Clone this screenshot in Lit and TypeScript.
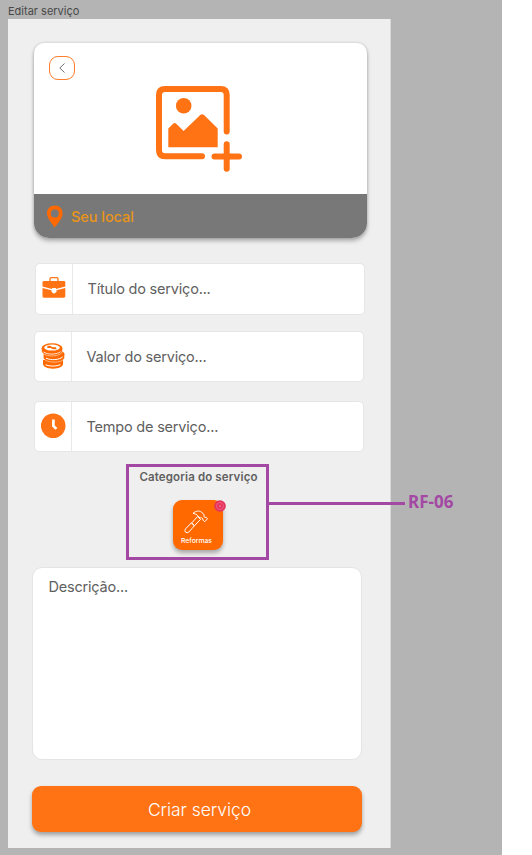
import { LitElement, html, css, svg } from "lit";
import { customElement, property } from "lit/decorators.js";

const briefcase = svg`<svg width="24" height="24" viewBox="0 0 24 24">
  <path d="M8 4.500V2.100Q8 .7 9.400.7h5.200Q16 .7 16 2.100v2.400" fill="none" stroke="#ff7315" stroke-width="1.300"/>
  <path d="M2 4h20q1.300 0 1.300 1.300V9.500L14 12v-1h-4v1L.5 9.500V5.300Q.5 4 2 4Z" fill="#ff7315"/>
  <path d="M.5 10.900 9.500 13.200v1.800l2.500 1.800 2.500-1.800v-1.800l8.800-2.300v8.400q0 1.400-1.400 1.400H1.900Q.5 20.700.5 19.300Z" fill="#ff7315"/>
</svg>`;

const coins = svg`<svg width="24" height="27" viewBox="0 0 24 27">
  <g fill="#ff6900">
    <path d="M2 17v4c0 2.700 4.500 4.700 10 4.700s10-2 10-4.700v-4Z"/>
    <path d="M4.500 21.800c4 1.800 11 1.800 15-.2" fill="none" stroke="#fff" stroke-width="1"/>
    <path d="M2.300 11v3.300c0 2.700 4.900 4.800 10.900 4.800s10.300-2 10.300-4.800V11Z" stroke="#fff" stroke-width=".5"/>
    <ellipse cx="13.200" cy="11" rx="10.400" ry="4.400"/>
    <path d="M5 15.200c5 2.300 13 1.800 16.600-1.200" fill="none" stroke="#fff" stroke-width="1"/>
    <path d="M.6 5.500v2.500c0 2.800 4.700 4.900 10.400 4.900s10.300-2.100 10.300-4.900V5.500Z" stroke="#fff" stroke-width=".5"/>
    <ellipse cx="11" cy="5.200" rx="10.400" ry="4.900"/>
    <path d="M2.500 9c4 2.800 13 2.800 17-.2" fill="none" stroke="#fff" stroke-width=".8"/>
  </g>
  <ellipse cx="11" cy="4.600" rx="7.800" ry="3" fill="#fff"/>
  <path d="m6.600 2.800 4.200.2-1 1 5 .2.900 2.100-5.500-.2.800-1-4.800-.2Z" fill="#ff6900"/>
</svg>`;

const clock = svg`<svg width="25" height="26" viewBox="0 0 25 26">
  <circle cx="12.200" cy="12.700" r="12.300" fill="#ff7315"/>
  <path d="M12.400 6.500v6.400l3 3" fill="none" stroke="#fff" stroke-width="2.700"/>
</svg>`;

@customElement("service-field")
class ServiceField extends LitElement {
  @property({ attribute: false }) icon: unknown;
  @property() label = "";

  static styles = css`
    :host {
      display: flex;
      box-sizing: border-box;
      height: 51px;
      border: 1px solid #e6e6e6;
      border-radius: 5px;
      background: #fff;
    }
    .icon {
      display: flex;
      align-items: center;
      justify-content: center;
      width: 36px;
      padding-bottom: 1px;
      border-right: 1px solid #e8e8e8;
    }
    .icon svg { display: block; }
    .label {
      padding-left: 14.500px;
      line-height: 49px;
      white-space: pre;
    }
  `;

  render() {
    return html`<div class="icon">${this.icon}</div><div class="label">${this.label}</div>`;
  }
}

@customElement("app-root")
class AppRoot extends LitElement {
  static styles = css`
    :host {
      display: block;
      width: 532px;
      height: 855px;
      overflow: hidden;
      background: #fff;
      font-family: Inter, "Noto Sans", sans-serif;
      color: #606060;
    }
    * { box-sizing: border-box; }
    svg { display: block; }
    .canvas {
      width: 502px;
      height: 855px;
      padding-left: 8px;
      background: #b4b4b4;
    }
    .frame-name {
      height: 19px;
      padding-top: 4px;
      font-size: 11px;
      line-height: 15px;
      color: #484848;
    }
    .phone {
      width: 383px;
      height: 829px;
      padding: 24px 0 0 24px;
      background: #efefef;
      border-right: 1px solid #d9d9d9;
    }
    .card {
      width: 333px;
      height: 195px;
      margin-left: 2px;
      border-radius: 10px 10px 15px 15px;
      background: #fff;
      box-shadow: 0 3px 4px rgba(0, 0, 0, .27), 0 0 3px rgba(0, 0, 0, .18);
      overflow: hidden;
    }
    .photo {
      display: flex;
      height: 151px;
      padding: 13px 0 0 15px;
    }
    .back {
      display: flex;
      align-items: center;
      justify-content: center;
      width: 26px;
      height: 24px;
      border: 1px solid #ff7d2b;
      border-radius: 9px;
    }
    .picture { margin: 29px 0 0 80px; }
    .place {
      display: flex;
      align-items: center;
      height: 44px;
      padding-left: 12px;
      gap: 8px;
      background: #787878;
      font-size: 14.500px;
      font-weight: 500;
      letter-spacing: -.05px;
      color: #e8941a;
    }
    .title, .price, .time, .description {
      font-size: 14.500px;
      font-weight: 370;
      letter-spacing: -.2px;
    }
    .title { width: 330px; margin: 25px 0 0 3px; height: 52px; }
    .price { width: 330px; margin: 16px 0 0 2px; }
    .time { width: 330px; margin: 19px 0 0 2px; }
    .marked {
      display: flex;
      align-items: flex-start;
      margin: 12px 0 0 94px;
      width: 340px;
    }
    .category {
      display: flex;
      flex-direction: column;
      align-items: center;
      flex: none;
      width: 143px;
      height: 96px;
      border: 3px solid #a349a4;
    }
    .heading {
      margin: 2px 0 0 2px;
      height: 31px;
      font-size: 11.500px;
      font-weight: 600;
      line-height: 16px;
      letter-spacing: .13px;
      white-space: nowrap;
    }
    .tile {
      position: relative;
      display: flex;
      flex-direction: column;
      align-items: center;
      width: 50px;
      height: 50px;
      padding-top: 9px;
      border-radius: 9px;
      background: #ff6900;
      box-shadow: 0 3px 4px rgba(0, 0, 0, .3);
      font-size: 6.800px;
      font-weight: 500;
      line-height: 11px;
      color: #fff;
    }
    .tile span { margin-right: 2px; }
    .tool { margin-right: 3px; }
    .remove { position: absolute; right: -3px; top: 0; }
    .leader {
      flex: none;
      width: 136px;
      height: 3px;
      margin-top: 38px;
      background: #a349a4;
    }
    .tag {
      margin: 27px 0 0 3px;
      font: 700 17px/22px "Noto Sans", sans-serif;
      color: #a349a4;
      white-space: nowrap;
    }
    .description {
      width: 330px;
      height: 193px;
      margin-top: 7px;
      padding: 9px 0 0 15.500px;
      border: 1px solid #e4e4e4;
      border-radius: 10px;
      background: #fff;
      line-height: 20px;
    }
    .submit {
      display: block;
      width: 330px;
      height: 46px;
      margin-top: 26px;
      padding: 1px 0 0 5px;
      border: 0;
      border-radius: 9px;
      background: #ff7315;
      box-shadow: 0 3px 4px rgba(0, 0, 0, .33);
      font: 360 17.500px/45px Inter, sans-serif;
      letter-spacing: -.05px;
      color: #fff;
    }
  `;

  render() {
    return html`
      <div class="canvas">
        <div class="frame-name">Editar serviço</div>
        <main class="phone">
          <section class="card">
            <div class="photo">
              <div class="back">
                <svg width="8" height="12" viewBox="0 0 8 12"><path d="M6.500 1.500 1.800 6l4.700 4.500" fill="none" stroke="#707070" stroke-width="1"/></svg>
              </div>
              <svg class="picture" width="88" height="88" viewBox="0 0 88 88">
                <g fill="none" stroke="#ff7315" stroke-width="6" stroke-linecap="round">
                  <path d="M71.700 46.500V10q0-6-6-6H10q-6 0-6 6v55q0 6.300 6 6.300H47"/>
                  <path d="M71.700 59.300v24.500M59.500 71.500h24.500"/>
                </g>
                <circle cx="28.700" cy="20.700" r="7.800" fill="#ff7315"/>
                <path d="M13.300 62.300V43.500l4.600-4.600q1.800-1.600 3.600 0l7.100 7.200L45 30.200q2.100-2 4.300 0l13.400 13.300v18.800Z" fill="#ff7315"/>
              </svg>
            </div>
            <div class="place">
              <svg width="17" height="23" viewBox="0 0 17 23"><path fill="#ff6900" fill-rule="evenodd" d="M8.800.5C4.300.5 1 3.900 1 8.200c0 5.100 4.500 9.600 7.800 14.300 3.300-4.700 7.800-9.200 7.800-14.300C16.600 3.900 13.300.5 8.800.5Zm0 4a4 4 0 1 1 0 8 4 4 0 0 1 0-8Z"/></svg>
              <span>Seu local</span>
            </div>
          </section>
          <service-field class="title" .icon=${briefcase} label="Título do serviço..."></service-field>
          <service-field class="price" .icon=${coins} label="Valor do serviço..."></service-field>
          <service-field class="time" .icon=${clock} label="Tempo de serviço..."></service-field>
          <div class="marked">
            <section class="category">
              <div class="heading">Categoria do serviço</div>
              <div class="tile">
                <svg class="tool" width="26" height="26" viewBox="0 0 26 26" fill="none" stroke="#fff" stroke-width="1" stroke-linejoin="round">
                  <path d="M10 4.300C12.800 1.800 16 1.500 18.500 3l2.600 2.800-.2 1.800 1.200.8 1-.2 1.400 1.600-2.900 3-1.700-1.700v-1.200l-1.200-1.100-1.600.2-2.800-2.800C13.200 5.200 11.700 4.700 10 4.300Z"/>
                  <path d="m14.600 7.500 2.900 2.900-6 6.300-2.800-2.800ZM8.300 13.900l3 3-5.500 6.200q-1.700 1.500-3.300 0-1.500-1.700.1-3.300Z"/>
                </svg>
                <span>Reformas</span>
                <svg class="remove" width="12" height="12" viewBox="0 0 12 12">
                  <circle cx="6" cy="6" r="5.800" fill="#e5335d"/>
                  <circle cx="6" cy="6" r="3.500" fill="none" stroke="#f07390" stroke-width=".7"/>
                  <path d="m4.800 4.800 2.400 2.400m0-2.400L4.800 7.200" stroke="#f07390" stroke-width=".8"/>
                </svg>
              </div>
            </section>
            <div class="leader"></div>
            <div class="tag">RF-06</div>
          </div>
          <div class="description">Descrição...</div>
          <button class="submit">Criar serviço</button>
        </main>
      </div>
    `;
  }
}
